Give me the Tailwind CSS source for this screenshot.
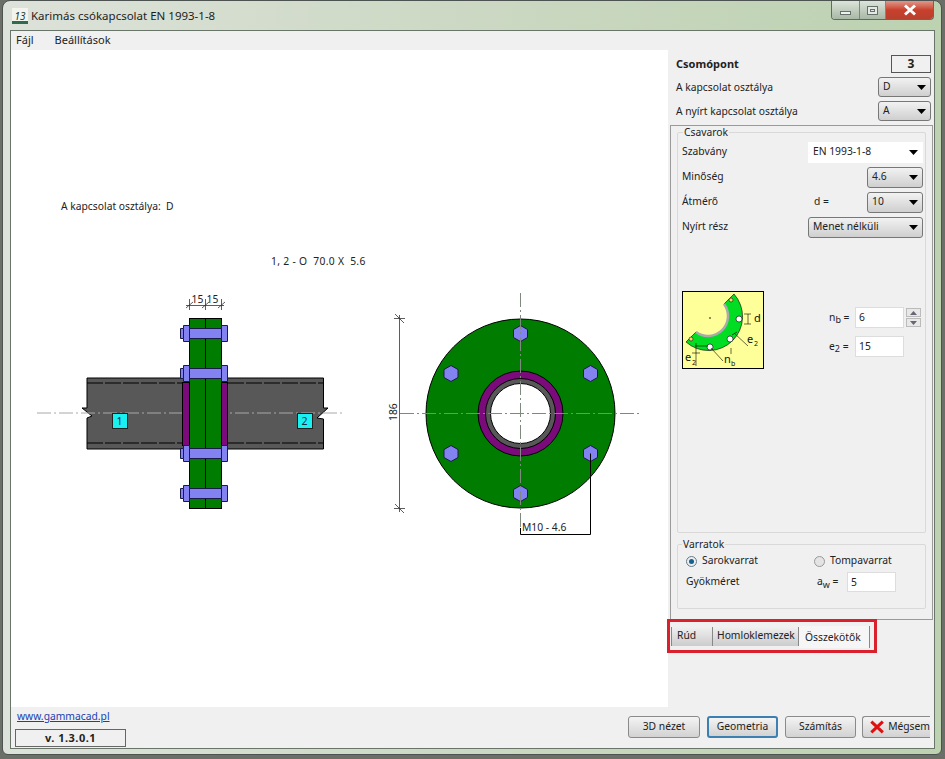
<!DOCTYPE html>
<html lang="hu">
<head>
  <meta charset="UTF-8" />
  <title>Karimás csókapcsolat EN 1993-1-8</title>
  <script src="https://cdn.jsdelivr.net/npm/@tailwindcss/browser@4"></script>
</head>
<body class="w-[945px] h-[759px] overflow-hidden bg-[#6b6f68] font-['Noto_Sans','Liberation_Sans',sans-serif] text-[10.3px] text-[#222]">

  <!-- window -->
  <div class="relative w-[940px] h-[755px] ml-[2px] rounded-t-[8px] rounded-b-[6px] border border-[#4d5350] bg-gradient-to-r from-[#dde2da] via-[#ccd8c3] to-[#bcd2b0] flex flex-col">

    <!-- title bar -->
    <div class="h-[29px] shrink-0 flex items-center pl-[9px] relative">
      <div class="w-[16px] h-[16px] flex flex-col items-center justify-end bg-[#f4f4ee] border-b-[3px] border-[#2f6b4f] text-[10px] italic leading-none text-[#1c3a2c] mr-[3px]">13</div>
      <span class="text-[11.5px] text-[#1d1d1d]">Karimás csókapcsolat EN 1993-1-8</span>
      <div class="absolute right-[7px] top-0 flex h-[19px] rounded-b-[4px] border border-t-0 border-[#5f6b60] overflow-hidden">
        <div class="w-[28px] bg-gradient-to-b from-[#dce4da] to-[#a8b8a6] border-r border-[#7d897d] flex items-center justify-center">
          <div class="w-[11px] h-[4px] mt-[5px] bg-[#eef1ee] border border-[#66706a]"></div>
        </div>
        <div class="w-[26px] bg-gradient-to-b from-[#dce4da] to-[#a8b8a6] border-r border-[#7d897d] flex items-center justify-center">
          <div class="w-[11px] h-[9px] bg-[#e4e9e4] border border-[#66706a] flex items-center justify-center"><div class="w-[5px] h-[3px] border border-[#66706a]"></div></div>
        </div>
        <div class="w-[47px] bg-gradient-to-b from-[#e0968a] via-[#c8402c] to-[#b9402e] flex items-center justify-center">
          <svg width="14" height="12" viewBox="0 0 14 12"><path d="M2 1.5L12 10.5M12 1.5L2 10.5" stroke="#fff" stroke-width="3" /></svg>
        </div>
      </div>
    </div>

    <!-- client area -->
    <div class="ml-[7px] w-[925px] h-[719px] border border-[#6a756a] bg-[#f0f0f0] flex flex-col">

      <!-- menu -->
      <div class="h-[19px] shrink-0 flex items-center gap-[21px] pl-[5px] text-[11px]">
        <span>Fájl</span>
        <span>Beállítások</span>
      </div>

      <div class="flex h-[657px]">
        <!-- drawing canvas -->
        <div class="w-[657px] h-[657px] bg-white shrink-0">
          <svg width="657" height="657" viewBox="11 50 657 657" font-family="'Noto Sans','Liberation Sans',sans-serif" font-size="10.3" fill="#222">
            <text x="61" y="210" xml:space="preserve">A kapcsolat osztálya:  D</text>
            <text x="271" y="265" xml:space="preserve" letter-spacing="0.3">1, 2 - O  70.0 X  5.6</text>

            <!-- side view: tube -->
            <path d="M87 378H323.5V408H328L317 418L323.5 419V449H87V418L92 416L82 408H87Z" fill="#585858" stroke="#000" />
            <path d="M87 383H182M228 383H323M87 443H182M228 443H323" stroke="#000" stroke-dasharray="16 2" />
            <path d="M37 413H345" stroke="#a8a8a8" stroke-dasharray="14 3 2 3" />
            <rect x="112.500" y="413.500" width="15" height="15" fill="#19f0f0" stroke="#222" />
            <text x="116.500" y="425" font-size="10.500" fill="#15313a">1</text>
            <rect x="297.500" y="413.500" width="15" height="15" fill="#19f0f0" stroke="#222" />
            <text x="301.500" y="425" font-size="10.500" fill="#15313a">2</text>

            <!-- welds and plates -->
            <rect x="182.500" y="382.500" width="7" height="63" fill="#7b0a7b" stroke="#000" />
            <rect x="220.500" y="382.500" width="7" height="63" fill="#7b0a7b" stroke="#000" />
            <rect x="189.500" y="318.500" width="32" height="190" fill="#007c00" stroke="#000" />
            <path d="M205.500 318V508" stroke="#000" />

            <!-- bolts -->
            <g fill="#8282f0" stroke="#1a1a4a" stroke-width="1">
              <path d="M180.500 328.500H183.500V325.500H189.500V328.500H221.500V325.500H227.500V341.500H221.500V338.500H189.500V341.500H183.500V338.500H180.500Z" />
              <path d="M180.500 368.500H183.500V365.500H189.500V368.500H221.500V365.500H227.500V381.500H221.500V378.500H189.500V381.500H183.500V378.500H180.500Z" />
              <path d="M180.500 448.500H183.500V445.500H189.500V448.500H221.500V445.500H227.500V461.500H221.500V458.500H189.500V461.500H183.500V458.500H180.500Z" />
              <path d="M180.500 488.500H183.500V485.500H189.500V488.500H221.500V485.500H227.500V501.500H221.500V498.500H189.500V501.500H183.500V498.500H180.500Z" />
              <path d="M183.500 328.500V338.500M189.500 328.500V338.500M221.500 328.500V338.500M183.500 368.500V378.500M189.500 368.500V378.500M221.500 368.500V378.500M183.500 448.500V458.500M189.500 448.500V458.500M221.500 448.500V458.500M183.500 488.500V498.500M189.500 488.500V498.500M221.500 488.500V498.500" fill="none" />
            </g>

            <!-- top dimension -->
            <path d="M186 305.500H224M189.500 299V310M205.500 299V310M221.500 299V310M186 308L193 302M202 308L209 302M218 308L225 302" stroke="#333" stroke-width="0.800" fill="none" />
            <text x="191.500" y="303">15</text>
            <text x="206.500" y="303">15</text>

            <!-- flange view -->
            <circle cx="520.500" cy="413.500" r="94.500" fill="#007c00" stroke="#000" />
            <circle cx="520.500" cy="413.500" r="42.500" fill="#7b0a7b" stroke="#000" />
            <circle cx="520.500" cy="413.500" r="35" fill="#585858" stroke="#000" />
            <circle cx="520.500" cy="413.500" r="30" fill="#fff" stroke="#000" />
            <g fill="#8282f0" stroke="#1a1a4a" stroke-width="1">
              <path d="M520.500 325.500L527.500 329.500V337.500L520.500 341.500L513.500 337.500V329.500Z" />
              <path d="M451 365.500L458 369.500V377.500L451 381.500L444 377.500V369.500Z" />
              <path d="M590.500 365.500L597.500 369.500V377.500L590.500 381.500L583.500 377.500V369.500Z" />
              <path d="M451 445.500L458 449.500V457.500L451 461.500L444 457.500V449.500Z" />
              <path d="M590.500 445.500L597.500 449.500V457.500L590.500 461.500L583.500 457.500V449.500Z" />
              <path d="M520.500 485.500L527.500 489.500V497.500L520.500 501.500L513.500 497.500V489.500Z" />
            </g>
            <path d="M400 413.500H642M520.500 293V534" stroke="#7d8a7d" stroke-dasharray="14 3 2 3" />

            <!-- dimension and leader -->
            <path d="M399.500 315V512M394 318.500H405M394 508.500H405M395 314L404 323M395 504L404 513" stroke="#333" stroke-width="0.800" fill="none" />
            <text transform="translate(397 421) rotate(-90)">186</text>
            <path d="M590.500 453.500V534.500H520.500V528" stroke="#000" fill="none" />
            <text x="522" y="531">M10 - 4.6</text>
          </svg>
        </div>

        <!-- right column -->
        <div class="w-[266px] flex flex-col">
          <div class="h-[75px] pl-[8px] pr-[3px] pt-[5px] flex flex-col">
            <div class="h-[18px] flex items-center justify-between">
              <span class="font-bold text-[11px]">Csomópont</span>
              <div class="w-[40px] h-[18px] border border-[#555] flex items-center justify-center font-bold text-[12px]">3</div>
            </div>
            <div class="h-[20px] mt-[4px] flex items-center justify-between">
              <span class="pt-[1px]">A kapcsolat osztálya</span>
              <div class="w-[53px] h-[20px] rounded-[3px] border border-[#777] bg-gradient-to-b from-[#f2f2f2] to-[#cfcfcf] flex items-center justify-between px-[4px]"><span>D</span><svg width="9" height="5"><path d="M0 0H9L4.500 5Z" fill="#000" /></svg></div>
            </div>
            <div class="h-[20px] mt-[4px] flex items-center justify-between">
              <span class="pt-[1px]">A nyírt kapcsolat osztálya</span>
              <div class="w-[53px] h-[20px] rounded-[3px] border border-[#777] bg-gradient-to-b from-[#f2f2f2] to-[#cfcfcf] flex items-center justify-between px-[4px]"><span>A</span><svg width="9" height="5"><path d="M0 0H9L4.500 5Z" fill="#000" /></svg></div>
            </div>
          </div>

          <!-- tab page -->
          <div class="ml-[2px] w-[263px] h-[495px] border border-[#9a9a9a] px-[6px] pt-[1px] flex flex-col">
            <!-- Csavarok -->
            <fieldset class="h-[406px] shrink-0 border border-[#d9d9d9] rounded-[2px] pl-[4px] pr-[2px] min-w-0">
              <legend class="ml-[1px] px-[1px] leading-[11px]">Csavarok</legend>
              <div class="h-[22px] mt-[3px] flex items-center justify-between">
                <span>Szabvány</span>
                <div class="w-[115px] h-[21px] bg-white flex items-center justify-between pl-[5px] pr-[5px]"><span>EN 1993-1-8</span><svg width="9" height="5"><path d="M0 0H9L4.500 5Z" fill="#000" /></svg></div>
              </div>
              <div class="h-[22px] mt-[3px] flex items-center justify-between">
                <span>Minőség</span>
                <div class="w-[56px] h-[21px] rounded-[3px] border border-[#777] bg-gradient-to-b from-[#f2f2f2] to-[#cfcfcf] flex items-center justify-between px-[4px]"><span>4.6</span><svg width="9" height="5"><path d="M0 0H9L4.500 5Z" fill="#000" /></svg></div>
              </div>
              <div class="h-[22px] mt-[3px] flex items-center">
                <span class="w-[132px]">Átmérő</span>
                <span class="w-[53px]">d =</span>
                <div class="w-[56px] h-[21px] rounded-[3px] border border-[#777] bg-gradient-to-b from-[#f2f2f2] to-[#cfcfcf] flex items-center justify-between px-[4px]"><span>10</span><svg width="9" height="5"><path d="M0 0H9L4.500 5Z" fill="#000" /></svg></div>
              </div>
              <div class="h-[22px] mt-[3px] flex items-center justify-between">
                <span>Nyírt rész</span>
                <div class="w-[115px] h-[21px] rounded-[3px] border border-[#777] bg-gradient-to-b from-[#f2f2f2] to-[#cfcfcf] flex items-center justify-between px-[4px]"><span>Menet nélküli</span><svg width="9" height="5"><path d="M0 0H9L4.500 5Z" fill="#000" /></svg></div>
              </div>

              <div class="mt-[53px] flex">
                <svg class="w-[82px] h-[78px] shrink-0" viewBox="0 0 82 78">
                  <rect x="0.500" y="0.500" width="81" height="77" fill="#ffff99" stroke="#000" />
                  <path d="M52 3A34 34 0 0 1 4 51L14 41A20 20 0 0 0 42 13Z" fill="#00dd22" stroke="#000" stroke-width="0.600" />
                  <path d="M42 13A20 20 0 0 1 14 41" fill="none" stroke="#aaa" stroke-width="2.500" />
                  <circle cx="49" cy="9" r="2" fill="#ffd070" stroke="#000" stroke-width="0.500" />
                  <circle cx="9" cy="48" r="2" fill="#ffd070" stroke="#000" stroke-width="0.500" />
                  <circle cx="57" cy="28" r="3" fill="#fff" stroke="#000" stroke-width="0.600" />
                  <circle cx="48" cy="48" r="3" fill="#fff" stroke="#000" stroke-width="0.600" />
                  <circle cx="28" cy="56" r="3" fill="#fff" stroke="#000" stroke-width="0.600" />
                  <circle cx="28" cy="27" r="0.800" fill="#000" />
                  <path d="M66 23V33M62 23H69M62 33H69M52 42L66 55M50 44L55 41M29 57L41 70M49 57V63M13 55H26M14 52V75M10 62H18" stroke="#000" stroke-width="0.600" fill="none" />
                  <text x="72" y="31" font-size="11" fill="#111">d</text>
                  <text x="65" y="52" font-size="11" fill="#111">e</text><text x="72" y="55" font-size="7" fill="#111">2</text>
                  <text x="3" y="70" font-size="11" fill="#111">e</text><text x="10" y="74" font-size="7" fill="#111">2</text>
                  <text x="42" y="72" font-size="11" fill="#111">n</text><text x="49" y="75" font-size="7" fill="#111">b</text>
                </svg>
                <div class="ml-[65px] pt-[16px] flex flex-col gap-[8px]">
                  <div class="flex items-center h-[21px]">
                    <span class="w-[26px]">n<sub class="text-[9px]">b</sub> =</span>
                    <div class="w-[49px] h-[21px] bg-white border border-[#ddd] pl-[3px] leading-[19px]">6</div>
                    <div class="ml-[2px] flex flex-col gap-[1px]">
                      <div class="w-[15px] h-[9px] border border-[#bbb] bg-[#e8e8e8] flex items-center justify-center"><svg width="7" height="4"><path d="M0 4H7L3.500 0Z" fill="#667" /></svg></div>
                      <div class="w-[15px] h-[9px] border border-[#bbb] bg-[#e8e8e8] flex items-center justify-center"><svg width="7" height="4"><path d="M0 0H7L3.500 4Z" fill="#667" /></svg></div>
                    </div>
                  </div>
                  <div class="flex items-center h-[21px]">
                    <span class="w-[26px]">e<sub class="text-[9px]">2</sub> =</span>
                    <div class="w-[49px] h-[21px] bg-white border border-[#ddd] pl-[3px] leading-[19px]">15</div>
                  </div>
                </div>
              </div>
            </fieldset>

            <!-- Varratok -->
            <fieldset class="mt-[6px] h-[70px] shrink-0 border border-[#d9d9d9] rounded-[2px] pl-[8px] min-w-0">
              <legend class="ml-[-4px] px-[1px] leading-[11px]">Varratok</legend>
              <div class="flex items-center h-[14px] mt-[4px]">
                <div class="w-[11px] h-[11px] rounded-full border border-[#6a7a8a] bg-[#e8eef2] flex items-center justify-center"><div class="w-[5px] h-[5px] rounded-full bg-[#15608c]"></div></div>
                <span class="ml-[5px] w-[112px]">Sarokvarrat</span>
                <div class="w-[11px] h-[11px] rounded-full border border-[#999] bg-[#e4e4e4]"></div>
                <span class="ml-[5px]">Tompavarrat</span>
              </div>
              <div class="flex items-center h-[20px] mt-[4px]">
                <span class="w-[131px]">Gyökméret</span>
                <span class="w-[30px]">a<sub class="text-[9px]">w</sub> =</span>
                <div class="w-[49px] h-[20px] bg-white border border-[#ddd] pl-[3px] leading-[18px]">5</div>
              </div>
            </fieldset>
          </div>

          <!-- tabs -->
          <div class="relative h-[87px]">
            <div class="absolute left-[-1px] top-[-1px] w-[210px] h-[34px] border-[3px] border-[#d9202c]"></div>
            <div class="ml-[3px] mt-[6px] flex h-[21px]">
              <div class="w-[42px] h-[19px] mt-[1px] border-l border-r border-[#888] bg-gradient-to-b from-[#f0f0f0] to-[#cccccc] pl-[5px] leading-[17px]">Rúd</div>
              <div class="w-[86px] h-[19px] mt-[1px] border-r border-[#888] bg-gradient-to-b from-[#f0f0f0] to-[#cccccc] pl-[4px] leading-[17px]">Homloklemezek</div>
              <div class="w-[71px] h-[22px] border-r border-[#888] bg-[#f6f6f6] pl-[6px] leading-[22px]">Összekötők</div>
            </div>
          </div>
        </div>
      </div>

      <!-- footer -->
      <div class="h-[41px] flex">
        <div class="w-[617px] pl-[4px] pt-[2px]">
          <a class="block pl-[2px] text-[#1a3fb0] underline leading-[15px]">www.gammacad.pl</a>
          <div class="w-[111px] h-[18px] mt-[5px] border border-[#666] flex items-center justify-center font-bold text-[11px] tracking-[0.5px]">v. 1.3.0.1</div>
        </div>
        <div class="flex pt-[9px]">
          <div class="w-[72px] h-[22px] rounded-[3px] border border-[#8a8a8a] bg-gradient-to-b from-[#f4f4f4] to-[#d2d2d2] flex items-center justify-center">3D nézet</div>
          <div class="ml-[7px] w-[71px] h-[22px] rounded-[3px] border-2 border-[#3c7fb1] bg-gradient-to-b from-[#f4f4f4] to-[#d2d2d2] flex items-center justify-center">Geometria</div>
          <div class="ml-[7px] w-[71px] h-[22px] rounded-[3px] border border-[#8a8a8a] bg-gradient-to-b from-[#f4f4f4] to-[#d2d2d2] flex items-center justify-center">Számítás</div>
          <div class="ml-[6px] w-[68px] h-[22px] rounded-l-[3px] border border-r-0 border-[#8a8a8a] bg-gradient-to-b from-[#f4f4f4] to-[#d2d2d2] flex items-center pl-[7px] gap-[4px]">
            <svg width="16" height="16" viewBox="0 0 16 16"><path d="M1.500 2L14.500 14M14.500 2L1.500 14" stroke="#e01010" stroke-width="3.500" /></svg>
            <span>Mégsem</span>
          </div>
        </div>
      </div>
    </div>
  </div>
</body>
</html>
